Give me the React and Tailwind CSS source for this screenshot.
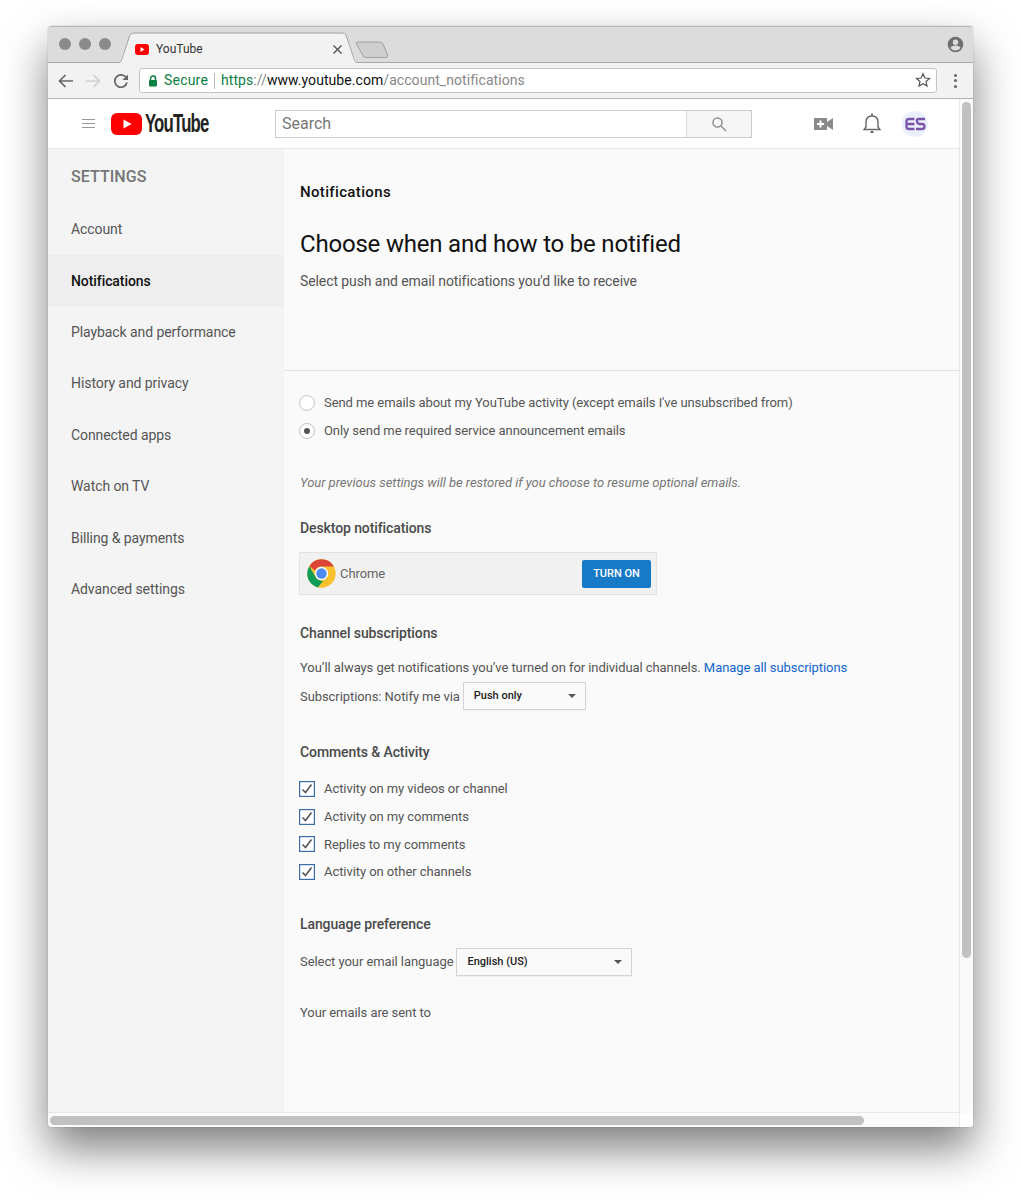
const Side = ({ children, active }) => (
  <div className={`h-[51.4px] flex items-center pl-[23px] text-[14px] tracking-[-0.08px] ${active ? "bg-[#eeeeee] text-[#111] font-medium" : "text-[#555]"}`}>{children}</div>
);

const Check = ({ children }) => (
  <div className="h-[27.6px] flex items-center -ml-px">
    <svg width="16" height="16" viewBox="0 0 16 16" className="mr-[9px]">
      <rect x="0.6" y="0.6" width="14.8" height="14.8" fill="#fff" stroke="#3b6ea8" strokeWidth="1.2" />
      <path d="M3.5 8.5 L6.5 11.5 L12.5 3.5" fill="none" stroke="#555" strokeWidth="1.6" />
    </svg>
    <span>{children}</span>
  </div>
);

const Radio = ({ children, on }) => (
  <div className="h-[27.7px] flex items-center -ml-px">
    <span className="w-4 h-4 mr-[9px] rounded-full border border-[#c4c4c4] bg-white flex items-center justify-center">
      {on && <span className="w-[6px] h-[6px] rounded-full bg-[#555]" />}
    </span>
    <span>{children}</span>
  </div>
);

const Select = ({ w, children }) => (
  <div className={`${w} h-[28px] border border-[#d3d3d3] bg-[#fafafa] flex items-center justify-between pl-[10px] pr-[9px] text-[11px] tracking-normal font-medium text-[#222] shadow-[0_1px_0_rgba(0,0,0,0.04)]`}>
    <span>{children}</span>
    <span className="w-0 h-0 border-x-[4px] border-x-transparent border-t-[4px] border-t-[#555]" />
  </div>
);

const H = ({ children, cls }) => <div className={`text-[14px] font-medium text-[#4a4a4a] tracking-[-0.1px] ${cls}`}>{children}</div>;

function YoutubeLogo() {
  return (
    <div className="flex items-center">
      <svg width="31" height="22" viewBox="0 0 31 22" className="shrink-0">
        <rect x="0" y="0" width="31" height="22" rx="6" fill="#ff0000" />
        <path d="M12.5 6.5 L20.5 11 L12.5 15.5 Z" fill="#fff" />
      </svg>
      <span className="ml-[3px] text-[25px] leading-none text-[#222] font-bold tracking-[-1.2px] inline-block scale-x-[0.67] origin-left [font-family:'Liberation_Sans',sans-serif]">YouTube</span>
    </div>
  );
}

function ChromeLogo() {
  return (
    <svg width="29" height="29" viewBox="0 0 48 48">
      <circle cx="24" cy="24" r="23.5" fill="#fbc02d" />
      <path d="M24 .5 A23.5 23.5 0 0 1 44.4 12.3 L24 12.3 A11.7 11.7 0 0 0 13.4 19 L3.9 11.9 A23.5 23.5 0 0 1 24 .5 Z" fill="#db4437" />
      <path d="M3.9 11.9 L14 29.5 A11.7 11.7 0 0 0 27 35.4 L18 47 A23.5 23.5 0 0 1 3.9 11.9 Z" fill="#0f9d58" />
      <circle cx="24" cy="24" r="11" fill="#fff" />
      <circle cx="24" cy="24" r="8.6" fill="#4d8bf0" />
    </svg>
  );
}

export default function App() {
  return (
    <div className="w-[1021px] h-[1200px] bg-white pt-[26px] px-[48px] overflow-hidden [font-family:Roboto,sans-serif]">
      <div className="w-[925px] h-[1101px] rounded-[4px] flex flex-col overflow-hidden bg-[#fafafa] shadow-[0_22px_44px_rgba(0,0,0,0.5),0_0_1px_rgba(0,0,0,0.5)]">
        {/* tab strip */}
        <div className="h-[37px] shrink-0 bg-[#dcdcdc] border-t border-[#b8b8b8] border-b border-b-[#a8a8a8] flex items-center relative">
          <div className="flex gap-[8px] pl-[11px] -mt-[1px]">
            <span className="w-3 h-3 rounded-full bg-[#8a8a8a]" />
            <span className="w-3 h-3 rounded-full bg-[#8a8a8a]" />
            <span className="w-3 h-3 rounded-full bg-[#8a8a8a]" />
          </div>
          <svg className="absolute left-[70px] top-[5px]" width="275" height="31" viewBox="0 0 275 31">
            <path d="M1 31 L12 3 Q13 1 16 1 H224 Q227 1 228 3 L239 31 Z" fill="#f2f2f2" />
            <path d="M0.5 30.500 H1 Q2.500 30.500 3.500 28 L12 3 Q13 1 16 1 H224 Q227 1 228 3 L236.500 28 Q237.500 30.500 239 30.500 H240" fill="none" stroke="#a0a0a0" />
            <path d="M239 10 H261 Q264 10 265 12 L269.500 23 Q270 25.500 268 25.500 H248 Q246 25.500 245 23.500 L238.500 12 Q238 10 239 10 Z" fill="#cfcfcf" stroke="#a0a0a0" />
          </svg>
          <div className="absolute left-[87px] top-[13px] flex items-center">
            <svg width="14" height="11" viewBox="0 0 14 11"><rect width="14" height="11" rx="3" fill="#ff0000" /><path d="M5.5 3 L9.5 5.500 L5.5 8 Z" fill="#fff" /></svg>
            <span className="ml-[7px] text-[12px] text-[#333]">YouTube</span>
          </div>
          <svg className="absolute left-[285px] top-[18px]" width="9" height="9" viewBox="0 0 9 9"><path d="M.5.5 L8.5 8.5 M8.5.5 L.5 8.5" stroke="#555" strokeWidth="1.4" /></svg>
          <svg className="absolute right-[9px] top-[9px]" width="17" height="17" viewBox="0 0 24 24" fill="#6f6f6f">
            <path d="M12 1a11 11 0 1 0 0 22 11 11 0 0 0 0-22Zm0 4a3.8 3.8 0 1 1 0 7.6A3.8 3.8 0 0 1 12 5Zm0 15.6a8.6 8.6 0 0 1-7-3.6c.1-2.3 4.7-3.5 7-3.5s6.900 1.200 7 3.500a8.600 8.600 0 0 1-7 3.600Z" />
          </svg>
        </div>
        {/* toolbar */}
        <div className="h-[36px] shrink-0 bg-[#f2f2f2] border-b border-[#b4b4b4] flex items-center">
          <svg className="ml-[10px]" width="15" height="14" viewBox="0 0 15 14" fill="none" stroke="#666" strokeWidth="1.7"><path d="M15 7 H2 M7.500 1 L1.500 7 L7.500 13" /></svg>
          <svg className="ml-[13px]" width="15" height="14" viewBox="0 0 15 14" fill="none" stroke="#d0d0d0" strokeWidth="1.700"><path d="M0 7 H13 M7.500 1 L13.500 7 L7.500 13" /></svg>
          <svg className="ml-[12px]" width="16" height="16" viewBox="0 0 16 16" fill="none"><path d="M13.400 5 A6.200 6.200 0 1 0 14 9.500" stroke="#666" strokeWidth="1.700" /><path d="M15 1.500 V7 H9.500 Z" fill="#666" /></svg>
          <div className="ml-[10px] w-[798px] h-[25px] rounded-[3px] border border-[#c4c4c4] bg-white flex items-center pl-[8px] text-[14px] tracking-[0.06px] relative">
            <svg width="10" height="12" viewBox="0 0 10 12"><path d="M2.500 5.500 V3.500 a2.500 2.500 0 0 1 5 0 V5.500" fill="none" stroke="#0b8043" strokeWidth="1.500" /><rect x="1" y="5" width="8" height="6.500" rx="1" fill="#0b8043" /></svg>
            <span className="ml-[6px] text-[#0b8043] tracking-[0.2px]">Secure</span>
            <span className="mx-[6px] w-px h-[16px] bg-[#b8b8b8]" />
            <span className="text-[#0b8043]">https</span><span className="text-[#888]">://</span><span className="text-[#111]">www.youtube.com</span><span className="text-[#888]">/account_notifications</span>
            <svg className="absolute right-[5px] top-[3px]" width="16" height="16" viewBox="0 0 16 16" fill="none" stroke="#555" strokeWidth="1.200"><path d="M8 1.700 L9.900 6 L14.500 6.400 L11 9.500 L12 14.100 L8 11.700 L4 14.100 L5 9.500 L1.500 6.400 L6.100 6 Z" /></svg>
          </div>
          <div className="ml-[17px] flex flex-col gap-[2.500px]">
            <span className="w-[3px] h-[3px] rounded-full bg-[#666]" />
            <span className="w-[3px] h-[3px] rounded-full bg-[#666]" />
            <span className="w-[3px] h-[3px] rounded-full bg-[#666]" />
          </div>
        </div>
        {/* viewport */}
        <div className="flex-1 flex min-h-0">
          <div className="w-[912px] flex flex-col border-r border-[#e8e8e8]">
            {/* yt header */}
            <div className="h-[50px] shrink-0 bg-white border-b border-[#e8e8e8] flex items-center">
              <div className="ml-[34px] w-[13px] flex flex-col gap-[2.500px]">
                <span className="h-[1.500px] bg-[#999]" /><span className="h-[1.500px] bg-[#999]" /><span className="h-[1.500px] bg-[#999]" />
              </div>
              <div className="ml-[16px] w-[164px]"><YoutubeLogo /></div>
              <div className="w-[477px] h-[28px] flex border border-[#cccccc]">
                <div className="flex-1 flex items-center pl-[6px] text-[16px] text-[#777] bg-white">Search</div>
                <div className="w-[65px] bg-[#f6f6f6] border-l border-[#d8d8d8] flex items-center justify-center">
                  <svg width="16" height="16" viewBox="0 0 16 16" fill="none" stroke="#909090" strokeWidth="1.500"><circle cx="6.500" cy="6.500" r="4.500" /><path d="M10 10 L15 15" /></svg>
                </div>
              </div>
              <svg className="ml-[62px]" width="19" height="14" viewBox="0 0 19 14">
                <path d="M0 1 H13 V5 L19 1 V13 L13 9 V13 H0 Z" fill="#8a8a8a" />
                <path d="M6.500 3.500 V10.500 M3 7 H10" stroke="#fff" strokeWidth="2" />
              </svg>
              <svg className="ml-[30px]" width="18" height="21" viewBox="0 0 18 21" fill="none" stroke="#666" strokeWidth="1.400">
                <path d="M1 16.500 H17 L15 14 V9 C15 5 12.500 3 9 3 C5.500 3 3 5 3 9 V14 Z" />
                <path d="M9 3 V.5 M7.500 19 H10.500" strokeWidth="1.800" />
              </svg>
              <div className="ml-[21px] w-[26px] h-[26px] rounded-full bg-[#eaf0fd] flex items-center justify-center">
                <svg width="21" height="14" viewBox="0 0 21 14" fill="none" stroke="#7a55a8" strokeWidth="2.300">
                  <path d="M9.500 2 H4 Q1.500 2 1.500 4 V10 Q1.500 12 4 12 H9.500 M2 7 H9.500" />
                  <path d="M20 2 H13.500 Q11.500 2 12 4.500 Q12.500 7 15 7 H17 Q19.500 7 19.500 9.500 Q19.500 12 17 12 H11" />
                </svg>
              </div>
            </div>
            <div className="flex-1 flex min-h-0 border-b border-[#e8e8e8]">
              {/* sidebar */}
              <div className="w-[236px] shrink-0 bg-[#f4f4f4]">
                <div className="h-[55px] pl-[23px] pt-[16px] text-[16px] font-medium text-[#757575] tracking-[0.05px]">SETTINGS</div>
                <Side>Account</Side>
                <Side active>Notifications</Side>
                <Side>Playback and performance</Side>
                <Side>History and privacy</Side>
                <Side>Connected apps</Side>
                <Side>Watch on TV</Side>
                <Side>Billing &amp; payments</Side>
                <Side>Advanced settings</Side>
              </div>
              {/* content */}
              <div className="flex-1 min-w-0 bg-[#fafafa] text-[13px] text-[#555] tracking-[-0.07px]">
                <div className="h-[222px] border-b border-[#e2e2e2] pl-[16px]">
                  <div className="pt-[33px] text-[15px] leading-[20px] font-medium text-[#111] tracking-[0.35px]">Notifications</div>
                  <div className="mt-[26px] text-[24px] leading-[32px] text-[#111] tracking-[-0.2px]">Choose when and how to be notified</div>
                  <div className="mt-[11px] text-[14px] leading-[20px] tracking-[-0.09px]">Select push and email notifications you'd like to receive</div>
                </div>
                <div className="pl-[16px] pt-[18px]">
                  <Radio>Send me emails about my YouTube activity (except emails I've unsubscribed from)</Radio>
                  <Radio on>Only send me required service announcement emails</Radio>
                  <div className="mt-[29px] italic text-[#777] leading-[20px] tracking-[-0.03px]">Your previous settings will be restored if you choose to resume optional emails.</div>
                  <H cls="mt-[25px] leading-[20px]">Desktop notifications</H>
                  <div className="mt-[14px] -ml-px w-[358px] h-[43px] bg-[#f1f1f1] border border-[#e2e2e2] flex items-center pl-[7px] pr-[5px]">
                    <ChromeLogo />
                    <span className="ml-[4px] text-[#666]">Chrome</span>
                    <div className="ml-auto w-[69px] h-[28px] rounded-[2px] bg-[#167ac6] text-white text-[11px] font-medium tracking-normal flex items-center justify-center">TURN ON</div>
                  </div>
                  <H cls="mt-[28px] leading-[20px]">Channel subscriptions</H>
                  <div className="mt-[15px] leading-[20px]">You’ll always get notifications you’ve turned on for individual channels. <span className="text-[#1265cc]">Manage all subscriptions</span></div>
                  <div className="mt-[4px] flex items-center">
                    <span>Subscriptions: Notify me via</span>
                    <div className="ml-[3px]"><Select w="w-[123px]">Push only</Select></div>
                  </div>
                  <H cls="mt-[32px] leading-[20px]">Comments &amp; Activity</H>
                  <div className="mt-[13px]">
                    <Check>Activity on my videos or channel</Check>
                    <Check>Activity on my comments</Check>
                    <Check>Replies to my comments</Check>
                    <Check>Activity on other channels</Check>
                  </div>
                  <H cls="mt-[28px] leading-[20px]">Language preference</H>
                  <div className="mt-[14px] flex items-center">
                    <span>Select your email language</span>
                    <div className="ml-[3px]"><Select w="w-[176px]">English (US)</Select></div>
                  </div>
                  <div className="mt-[27px] leading-[20px]">Your emails are sent to</div>
                </div>
              </div>
            </div>
            {/* h scrollbar */}
            <div className="h-[14px] shrink-0 bg-[#fafafa] flex items-center px-[2px]">
              <div className="w-[814px] h-[9px] rounded-full bg-[#c1c1c1]" />
            </div>
          </div>
          {/* v scrollbar */}
          <div className="w-[13px] flex flex-col bg-[#fafafa]">
            <div className="flex-1 flex justify-center pt-[3px]">
              <div className="w-[9px] h-[856px] rounded-full bg-[#c1c1c1]" />
            </div>
            <div className="h-[14px] bg-white" />
          </div>
        </div>
      </div>
    </div>
  );
}
